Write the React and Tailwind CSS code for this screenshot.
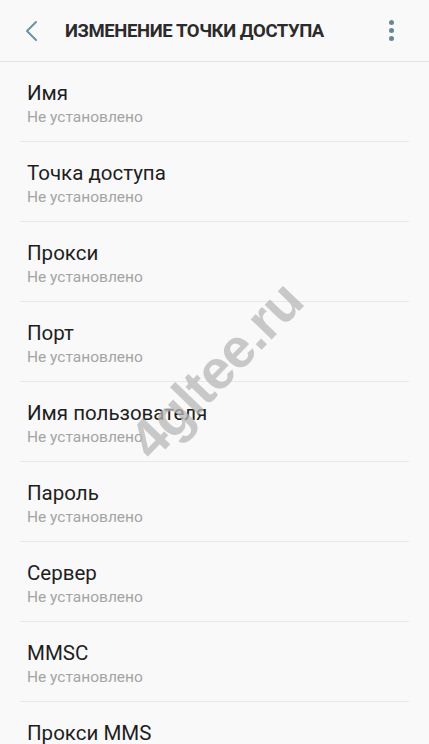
import React from "react";

const items = [
  "Имя",
  "Точка доступа",
  "Прокси",
  "Порт",
  "Имя пользователя",
  "Пароль",
  "Сервер",
  "MMSC",
  "Прокси MMS",
];

export default function App() {
  return (
    <div
      className="relative w-[429px] h-[744px] overflow-hidden bg-[#f9f9f9]"
      style={{ fontFamily: "Roboto, 'Noto Sans', sans-serif" }}
    >
      <div className="h-[62px] flex items-center border-b border-[#e3e3e3]">
        <div className="w-[65px] flex items-center pl-[24px]">
          <svg width="14" height="22" viewBox="0 0 14 22" fill="none">
            <path d="M12 2 L3 11 L12 20" stroke="#6a93a5" strokeWidth="2" strokeLinecap="round" strokeLinejoin="round" />
          </svg>
        </div>
        <div className="flex-1 text-[18.5px] font-bold text-[#2b2b2b] tracking-[-0.4px] leading-none pt-[1px]">
          ИЗМЕНЕНИЕ ТОЧКИ ДОСТУПА
        </div>
        <div className="w-[76px] flex flex-col items-center gap-[3px]">
          <div className="w-[5px] h-[5px] rounded-full bg-[#6a8795]" />
          <div className="w-[5px] h-[5px] rounded-full bg-[#6a8795]" />
          <div className="w-[5px] h-[5px] rounded-full bg-[#6a8795]" />
        </div>
      </div>
      <div className="flex flex-col px-[20px]">
        {items.map((t, i) => (
          <div
            key={t}
            className={"h-[80px] flex flex-col justify-center pl-[7px] pt-[4px] " + (i < items.length - 1 ? "border-b border-[#e8e8e8]" : "")}
          >
            <div className="text-[20.5px] text-[#1e1e1e] leading-[26px]">{t}</div>
            <div className="text-[15.5px] text-[#a4a4a4] leading-[22px]">Не установлено</div>
          </div>
        ))}
      </div>
      <div
        className="pointer-events-none absolute left-[86px] top-[343px] w-[260px] text-center text-[55px] font-bold text-[#b8b8b8] opacity-75 leading-none -rotate-[46deg] tracking-[-1px]"
        style={{ fontFamily: "'Liberation Sans', Arial, sans-serif" }}
      >
        4gltee.ru
      </div>
    </div>
  );
}
